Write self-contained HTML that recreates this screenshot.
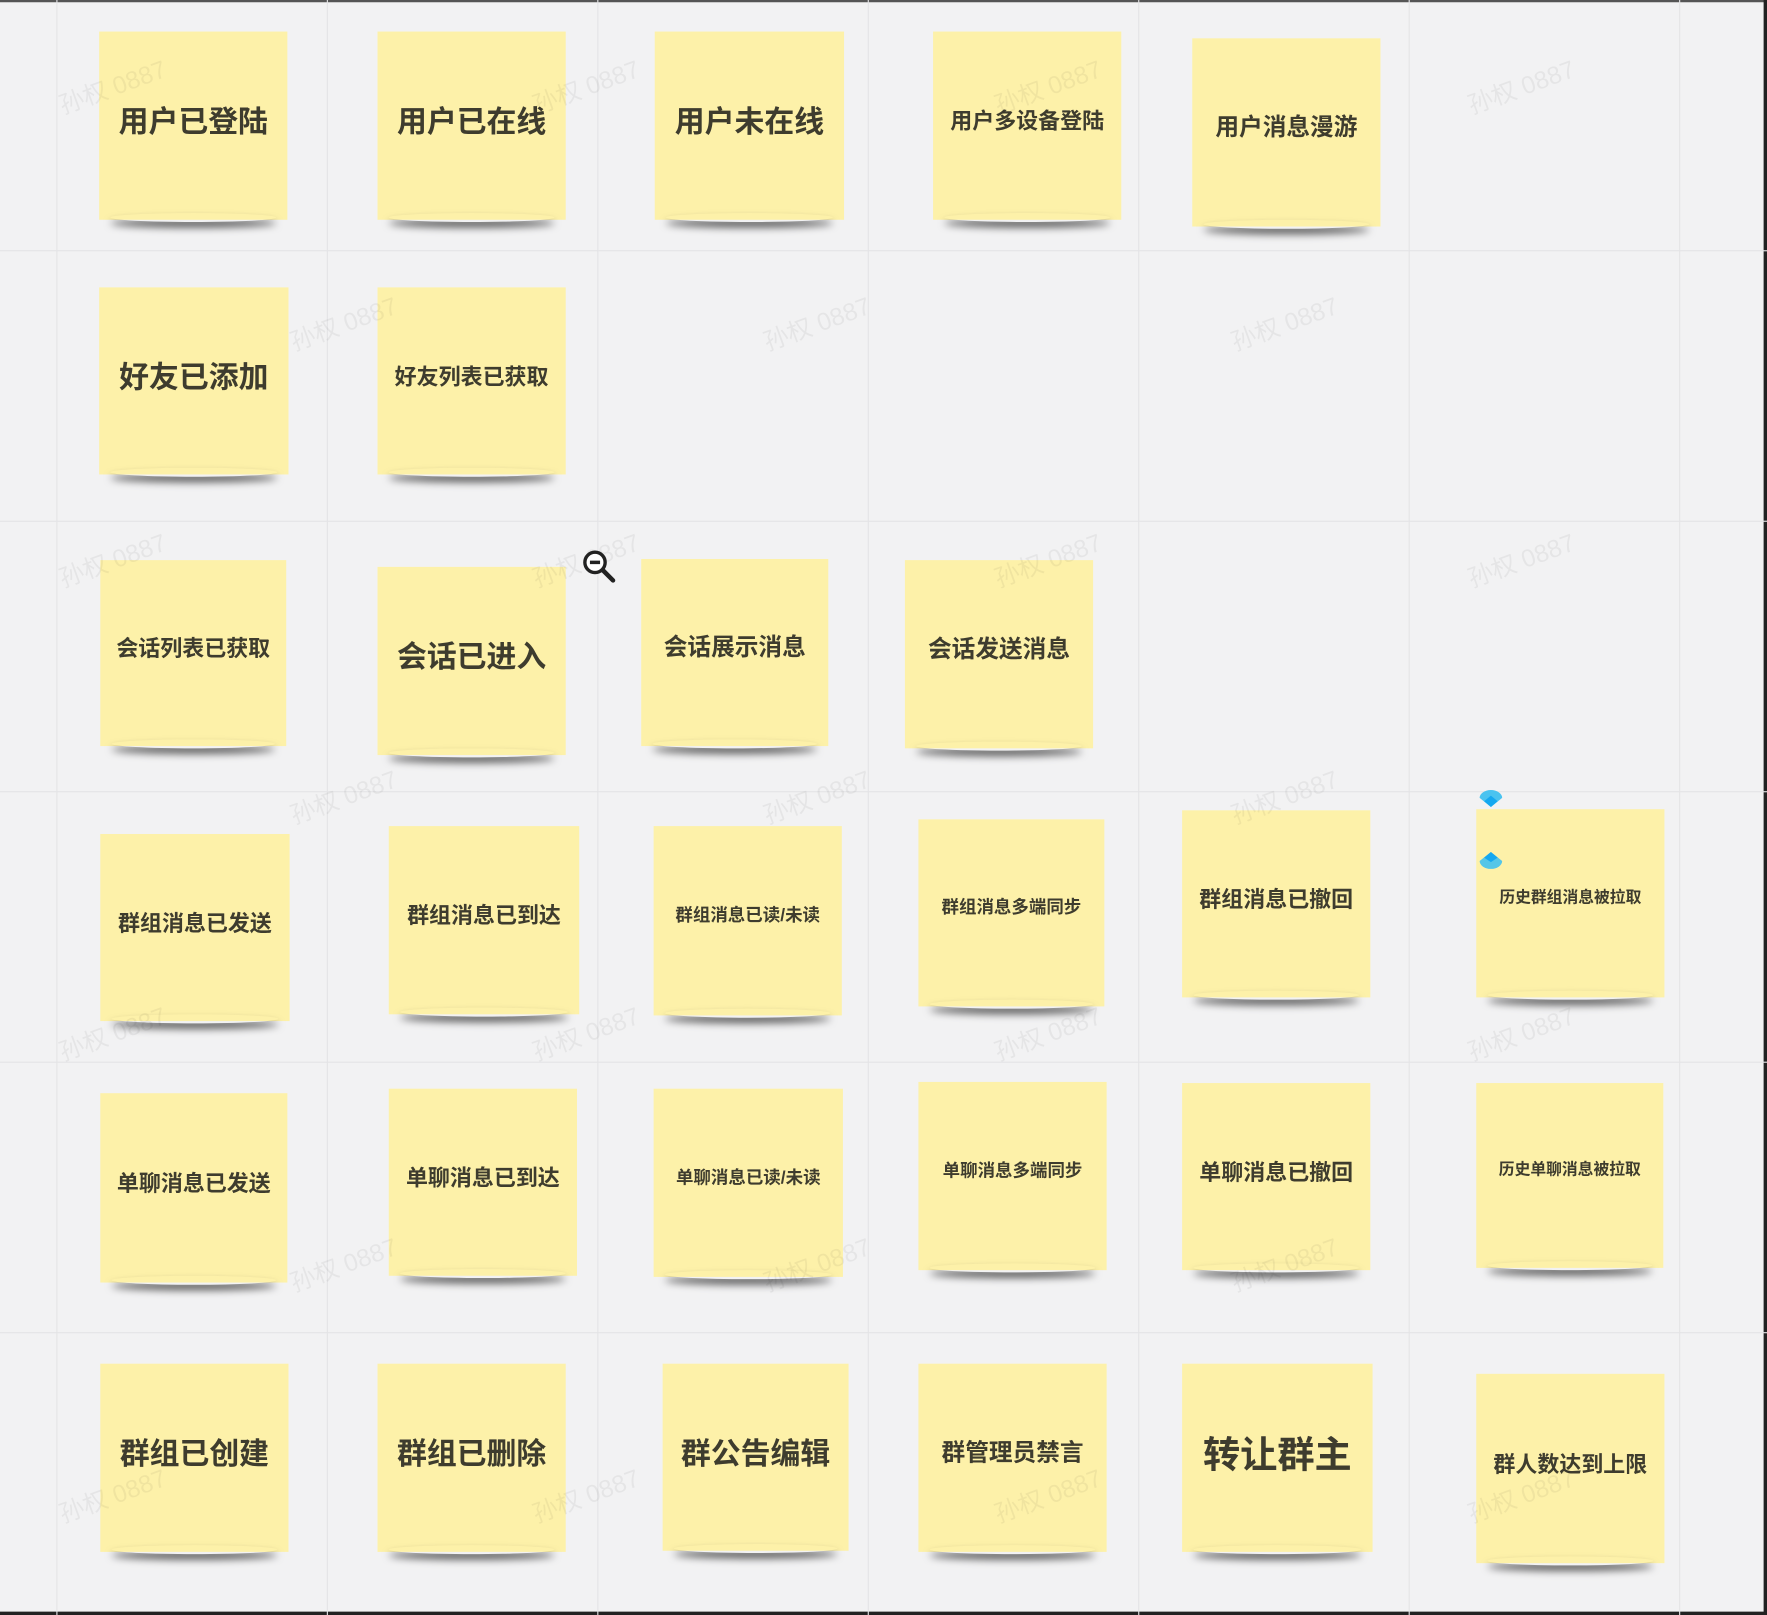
<!DOCTYPE html>
<html><head><meta charset="utf-8"><style>
html,body{margin:0;padding:0;width:1767px;height:1615px;overflow:hidden;background:#f2f2f3}
#w{position:absolute;left:0;top:0;width:1568px;height:1433px;transform-origin:0 0;transform:scale(1.12691,1.12701);background:#f2f2f3;overflow:hidden}
.vl{position:absolute;top:0;width:1px;height:1433px;background:#e4e4e6}
.hl{position:absolute;left:0;height:1px;width:1568px;background:#e4e4e6}
.n{position:absolute;background:#fdf1a9;display:flex;align-items:center;justify-content:center;padding-bottom:12px;box-sizing:border-box;font-family:"Liberation Sans","Noto Sans CJK SC",sans-serif;font-weight:bold;color:#3e3c2e;white-space:nowrap;letter-spacing:0;z-index:1}
.n::after{content:"";position:absolute;left:10px;right:10px;bottom:-2px;height:8px;border-radius:50%;box-shadow:0 5px 7px rgba(0,0,0,.6);z-index:-1}
.s24{font-size:26.5px}.s20{font-size:21px}.s17{font-size:19.5px}.s14{font-size:15.5px}.s12{font-size:14px}.s28{font-size:33px}
.wm{position:absolute;font-family:"Liberation Sans","Noto Sans CJK SC",sans-serif;font-size:22px;color:rgba(0,0,0,.05);transform:rotate(-20deg);z-index:2}
</style></head><body><div id="w">
<div style="position:absolute;left:0;top:0;width:1568px;height:2px;background:#555"></div>
<div style="position:absolute;right:0;top:0;width:3px;height:1433px;background:#222"></div>
<div style="position:absolute;left:0;bottom:0;width:1568px;height:3px;background:#222"></div>
<div class="vl" style="left:50px"></div><div class="vl" style="left:290px"></div><div class="vl" style="left:530px"></div><div class="vl" style="left:770px"></div><div class="vl" style="left:1010px"></div><div class="vl" style="left:1250px"></div><div class="vl" style="left:1490px"></div>
<div class="hl" style="top:222px"></div><div class="hl" style="top:462px"></div><div class="hl" style="top:702px"></div><div class="hl" style="top:942px"></div><div class="hl" style="top:1182px"></div>

<div class="n s24" style="left:88px;top:28px;width:167px;height:167px">用户已登陆</div>
<div class="n s24" style="left:335px;top:28px;width:167px;height:167px">用户已在线</div>
<div class="n s24" style="left:581px;top:28px;width:168px;height:167px">用户未在线</div>
<div class="n s17" style="left:828px;top:28px;width:167px;height:167px">用户多设备登陆</div>
<div class="n s20" style="left:1058px;top:34px;width:167px;height:167px">用户消息漫游</div>

<div class="n s24" style="left:88px;top:255px;width:168px;height:166px">好友已添加</div>
<div class="n s17" style="left:335px;top:255px;width:167px;height:166px">好友列表已获取</div>

<div class="n s17" style="left:89px;top:497px;width:165px;height:165px">会话列表已获取</div>
<div class="n s24" style="left:335px;top:503px;width:167px;height:167px">会话已进入</div>
<div class="n s20" style="left:569px;top:496px;width:166px;height:166px">会话展示消息</div>
<div class="n s20" style="left:803px;top:497px;width:167px;height:167px">会话发送消息</div>

<div class="n s17" style="left:89px;top:740px;width:168px;height:166px">群组消息已发送</div>
<div class="n s17" style="left:345px;top:733px;width:169px;height:167px">群组消息已到达</div>
<div class="n s14" style="left:580px;top:733px;width:167px;height:168px">群组消息已读/未读</div>
<div class="n s14" style="left:815px;top:727px;width:165px;height:166px">群组消息多端同步</div>
<div class="n s17" style="left:1049px;top:719px;width:167px;height:166px">群组消息已撤回</div>
<div class="n s12" style="left:1310px;top:718px;width:167px;height:167px">历史群组消息被拉取</div>

<div class="n s17" style="left:89px;top:970px;width:166px;height:168px">单聊消息已发送</div>
<div class="n s17" style="left:345px;top:966px;width:167px;height:166px">单聊消息已到达</div>
<div class="n s14" style="left:580px;top:966px;width:168px;height:167px">单聊消息已读/未读</div>
<div class="n s14" style="left:815px;top:960px;width:167px;height:167px">单聊消息多端同步</div>
<div class="n s17" style="left:1049px;top:961px;width:167px;height:166px">单聊消息已撤回</div>
<div class="n s12" style="left:1310px;top:961px;width:166px;height:164px">历史单聊消息被拉取</div>

<div class="n s24" style="left:89px;top:1210px;width:167px;height:167px">群组已创建</div>
<div class="n s24" style="left:335px;top:1210px;width:167px;height:167px">群组已删除</div>
<div class="n s24" style="left:588px;top:1210px;width:165px;height:166px">群公告编辑</div>
<div class="n s20" style="left:815px;top:1210px;width:167px;height:167px">群管理员禁言</div>
<div class="n s28" style="left:1049px;top:1210px;width:169px;height:167px">转让群主</div>
<div class="n s17" style="left:1310px;top:1219px;width:167px;height:168px">群人数达到上限</div>

<div class="wm" style="left:50px;top:60px">孙权 0887</div>
<div class="wm" style="left:470px;top:60px">孙权 0887</div>
<div class="wm" style="left:880px;top:60px">孙权 0887</div>
<div class="wm" style="left:1300px;top:60px">孙权 0887</div>
<div class="wm" style="left:255px;top:270px">孙权 0887</div>
<div class="wm" style="left:675px;top:270px">孙权 0887</div>
<div class="wm" style="left:1090px;top:270px">孙权 0887</div>
<div class="wm" style="left:50px;top:480px">孙权 0887</div>
<div class="wm" style="left:470px;top:480px">孙权 0887</div>
<div class="wm" style="left:880px;top:480px">孙权 0887</div>
<div class="wm" style="left:1300px;top:480px">孙权 0887</div>
<div class="wm" style="left:255px;top:690px">孙权 0887</div>
<div class="wm" style="left:675px;top:690px">孙权 0887</div>
<div class="wm" style="left:1090px;top:690px">孙权 0887</div>
<div class="wm" style="left:50px;top:900px">孙权 0887</div>
<div class="wm" style="left:470px;top:900px">孙权 0887</div>
<div class="wm" style="left:880px;top:900px">孙权 0887</div>
<div class="wm" style="left:1300px;top:900px">孙权 0887</div>
<div class="wm" style="left:255px;top:1105px">孙权 0887</div>
<div class="wm" style="left:675px;top:1105px">孙权 0887</div>
<div class="wm" style="left:1090px;top:1105px">孙权 0887</div>
<div class="wm" style="left:50px;top:1310px">孙权 0887</div>
<div class="wm" style="left:470px;top:1310px">孙权 0887</div>
<div class="wm" style="left:880px;top:1310px">孙权 0887</div>
<div class="wm" style="left:1300px;top:1310px">孙权 0887</div>

<svg style="position:absolute;left:514px;top:485px;z-index:5" width="36" height="36" viewBox="0 0 36 36">
<circle cx="14" cy="14" r="9" fill="#fff" stroke="#222" stroke-width="3"/>
<line x1="9.5" y1="14" x2="18.5" y2="14" stroke="#222" stroke-width="3"/>
<line x1="21" y1="21" x2="30" y2="30" stroke="#222" stroke-width="4" stroke-linecap="round"/>
</svg>
<svg style="position:absolute;left:1311px;top:700px;z-index:5" width="24" height="18" viewBox="0 0 24 18">
<path d="M2 8 A10 7 0 0 1 22 8 L12 16 Z" fill="#4ac3f0"/><path d="M6 11 L12 6 L18 11 L12 16 Z" fill="#15a8f0"/>
</svg>
<svg style="position:absolute;left:1311px;top:754px;z-index:5" width="24" height="18" viewBox="0 0 24 18">
<path d="M2 10 A10 7 0 0 0 22 10 L12 2 Z" fill="#55c6e8"/><path d="M6 7 L12 2 L18 7 L12 11 Z" fill="#15a8f0"/>
</svg>
</div></body></html>
